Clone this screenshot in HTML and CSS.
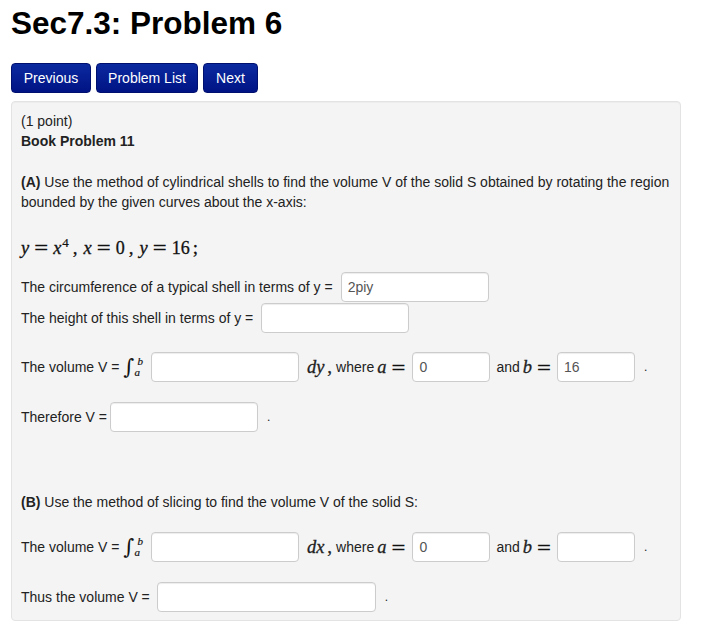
FILE: index.html
```html
<!DOCTYPE html>
<html lang="en">
<head>
  <meta charset="UTF-8" />
  <meta name="viewport" content="width=device-width, initial-scale=1.0"/>
  <title>Sec7.3: Problem 6</title>
  <link rel="stylesheet" href="styles.css">
</head>
<body>

<div class="page">
  <h1>Sec7.3: Problem 6</h1>

  <!-- problem navigation -->
  <div class="nav">
    <a href="#" class="btn btn-prev">Previous</a>
    <a href="#" class="btn btn-list">Problem List</a>
    <a href="#" class="btn btn-next">Next</a>
  </div>

  <!-- problem body -->
  <div class="problem">
    <div>(1 point)</div>
    <div class="bold">Book Problem 11</div>

    <p class="part"><b>(A)</b> Use the method of cylindrical shells to find the volume V of the solid S obtained by rotating the region<br>bounded by the given curves about the x-axis:</p>

    <div class="math-line"><span class="mi">y</span><span class="mo">=</span><span class="mi">x</span><span class="sup">4</span><span class="mp">,</span><span class="mi">x</span><span class="mo">=</span><span class="mn">0</span><span class="mp">,</span><span class="mi">y</span><span class="mo">=</span><span class="mn">16</span><span class="mp semi">;</span></div>

    <div class="row first">
      <span>The circumference of a typical shell in terms of y =</span>
      <input class="ans" type="text" value="2piy">
    </div>
    <div class="row">
      <span>The height of this shell in terms of y =</span>
      <input class="ans" type="text">
    </div>

    <div class="row vol">
      <span>The volume V =</span>
      <span class="int"><span class="int-sign">∫</span><span class="lim"><i>b</i><i>a</i></span></span>
      <input class="ans" type="text">
      <span class="mi d">dy</span><span class="comma">,</span><span class="word">where</span>
      <span class="mi var">a</span><span class="eq">=</span>
      <input class="ans small" type="text" value="0">
      <span class="word and">and</span>
      <span class="mi var">b</span><span class="eq">=</span>
      <input class="ans small b-in" type="text" value="16">
      <span class="dot">.</span>
    </div>

    <div class="row gap">
      <span>Therefore V =</span>
      <input class="ans tight" type="text">
      <span class="dot">.</span>
    </div>

    <p class="part part-b"><b>(B)</b> Use the method of slicing to find the volume V of the solid S:</p>

    <div class="row gap">
      <span>The volume V =</span>
      <span class="int"><span class="int-sign">∫</span><span class="lim"><i>b</i><i>a</i></span></span>
      <input class="ans" type="text">
      <span class="mi d">dx</span><span class="comma">,</span><span class="word">where</span>
      <span class="mi var">a</span><span class="eq">=</span>
      <input class="ans small" type="text" value="0">
      <span class="word and">and</span>
      <span class="mi var">b</span><span class="eq">=</span>
      <input class="ans small b-in" type="text">
      <span class="dot">.</span>
    </div>

    <div class="row gap">
      <span>Thus the volume V =</span>
      <input class="ans wide" type="text">
      <span class="dot">.</span>
    </div>
  </div>
</div>

</body>
</html>
```

FILE: styles.css
```css
* { box-sizing: border-box; }
body { margin: 0; font-family: "Liberation Sans", Arial, sans-serif; font-size: 14px; line-height: 20px; color: #222; background: #fff; }
.page { padding: 3px 11px 0; }
h1 { font-size: 31.5px; line-height: 40px; margin: 0 0 20px; color: #000; font-weight: bold; }

.nav { display: flex; gap: 5px; margin-bottom: 8px; }
.btn { display: block; height: 30px; padding: 4px 0; line-height: 20px; text-align: center; color: #fff; text-decoration: none; border: 1px solid #00106e; border-radius: 4px; background: linear-gradient(#0b2a9f, #001384); }
.btn-prev { width: 80px; }
.btn-list { width: 102px; }
.btn-next { width: 55px; }

.problem { width: 670px; background: #f4f4f4; border: 1px solid #e3e3e3; border-radius: 4px; padding: 9px 9px 8px; box-shadow: inset 0 1px 1px rgba(0, 0, 0, 0.03); }
.bold { font-weight: bold; }
.part { margin: 21px 0 0; }
.part-b { margin-top: 60px; }

.row { display: flex; align-items: center; height: 31px; white-space: nowrap; }
.row.first { margin-top: 16px; }
.row.vol { margin-top: 18px; }
.row.gap { margin-top: 19px; }

/* math bits */
.math-line { height: 24px; line-height: 24px; margin-top: 19px; white-space: nowrap; color: #111; }
.mi, .mn, .mp, .sup, .comma { font-family: "Liberation Serif", "Times New Roman", serif; -webkit-text-stroke: 0.3px currentColor; }
.mi { font-style: italic; font-size: 18.5px; }
.mn { font-size: 18px; }
.mo, .eq { font-family: "DejaVu Serif", serif; font-size: 19px; }
.mo { margin: 0 4px; }
.mp { font-size: 19px; margin: 0 6px 0 4px; }
.mp.semi { margin: 0 0 0 3px; }
.sup { font-size: 13px; vertical-align: 7px; margin-left: 1px; -webkit-text-stroke: 0.2px currentColor; }

.int { display: inline-flex; align-items: center; margin-left: 4px; color: #111; }
.int-sign { font-family: "DejaVu Serif", serif; font-style: italic; font-size: 21px; line-height: 24px; }
.lim { display: inline-flex; flex-direction: column; gap: 1px; font-family: "Liberation Serif", serif; font-size: 11px; line-height: 10px; -webkit-text-stroke: 0.2px currentColor; }
.lim i:first-child { margin-left: 3px; }

.d { margin-left: 8px; }
.comma { font-size: 19px; margin-left: 3px; }
.word { margin-left: 4px; }
.var { margin-left: 3px; }
.eq { margin-left: 4px; color: #111; }
.and { margin-left: 6px; }

.ans { width: 148px; height: 30px; padding: 4px 6px; margin-left: 8px; border: 1px solid #ccc; border-radius: 4px; background: #fff; font-family: "Liberation Sans", Arial, sans-serif; font-size: 14px; color: #555; box-shadow: inset 0 1px 1px rgba(0, 0, 0, 0.075); }
.ans.small { width: 78px; margin-left: 6px; }
.ans.b-in { margin-left: 5px; }
.ans.tight { margin-left: 3px; }
.ans.wide { width: 219px; margin-left: 7px; }
.dot { margin-left: 9px; font-size: 12px; }
```
